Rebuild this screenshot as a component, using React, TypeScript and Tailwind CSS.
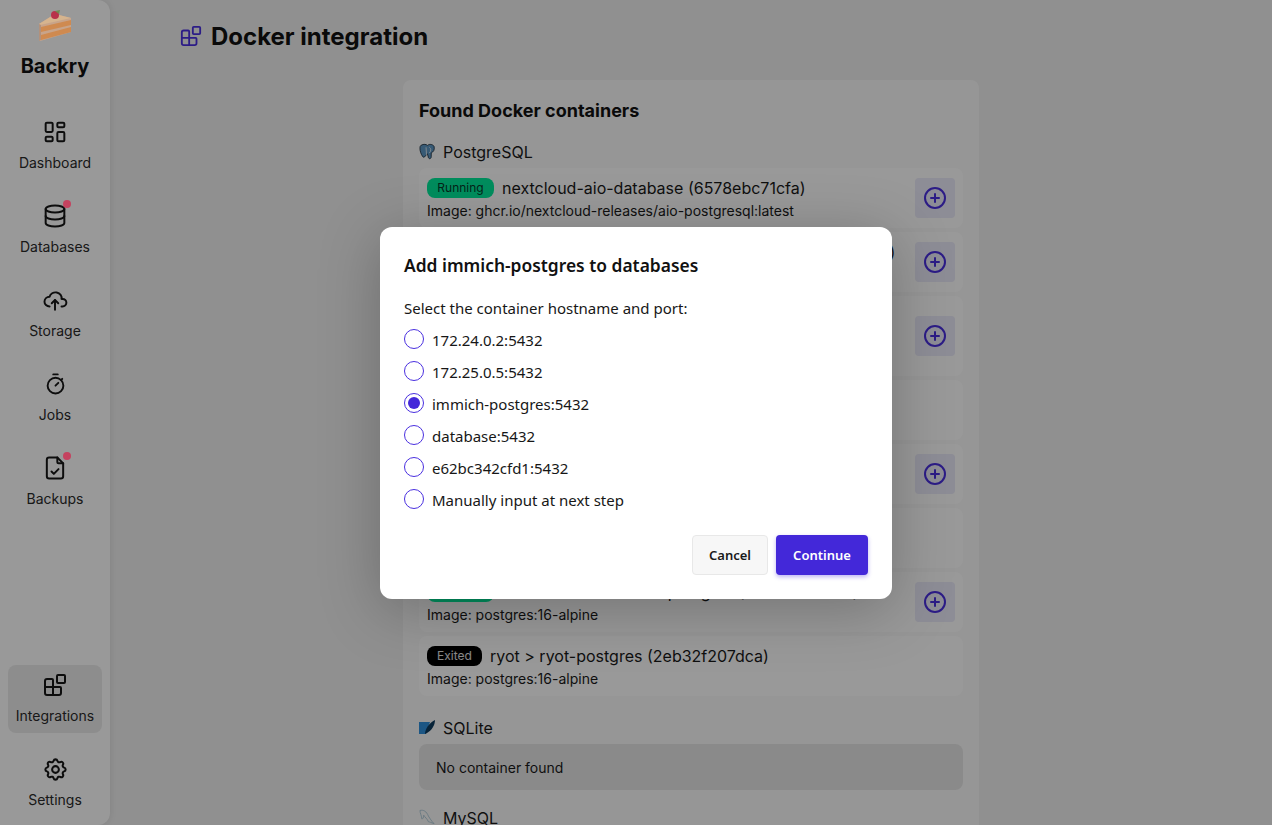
import React from "react";
import { Blocks, CirclePlus } from "lucide-react";
import { TbLayoutDashboard, TbDatabase, TbCloudUpload, TbStopwatch, TbFileCheck, TbSettings } from "react-icons/tb";

function Cake() {
  return (
    <svg width="34" height="34" viewBox="0 0 34 34" className="relative z-[60] block">
      <path d="M1 15 L17 5 L33 9 L33 23 L2 32 L1 31 Z" fill="#c8a48a" />
      <path d="M1 15 L17 5 L33 9 L2 16 Z" fill="#d6b48e" />
      <path d="M3 18 L33 11 L33 16 L3 23 Z" fill="#cf8a50" />
      <path d="M3 26 L33 18 L33 23 L3 31 Z" fill="#cf8a50" />
      <path d="M1 15 L3 16 L3 31 L1 32 Z" fill="#b2917c" />
      <circle cx="17" cy="6" r="4" fill="#b8324a" />
      <path d="M17 2 L22 1 L21 5 Z" fill="#6e8c50" />
    </svg>
  );
}

function Elephant() {
  return (
    <svg width="17" height="18" viewBox="0 0 17 18">
      <path d="M2 2 C5 0 8 1 9 2 C11 0 15 1 16 3 C17 7 15 9 13 10 L13 14 C13 16 11 17 10 15 L9 11 C7 12 6 16 4 14 C2 11 1 8 1 5 C1 4 1 3 2 2 Z" fill="#5c96c4" stroke="#1f2f3e" strokeWidth="0.9" />
      <path d="M7.5 4 L8 12 M11 4 C13 5 13 8 11 10" fill="none" stroke="#e8eef2" strokeWidth="0.9" />
    </svg>
  );
}

function Feather() {
  return (
    <svg width="16" height="16" viewBox="0 0 16 16">
      <path d="M0 2 H11 L7 14 H0 Z" fill="#2f8fdc" />
      <path d="M6 14 C6 9 10 3 16 0 C16 5 13 10 8 13 Z" fill="#0e3c60" />
    </svg>
  );
}

function Dolphin() {
  return (
    <svg width="17" height="18" viewBox="0 0 17 18" fill="none" stroke="#a8c6d6" strokeWidth="0.9">
      <path d="M1 1 C5 0 8 2 10 7 C12 10 13 12 16 15 C13 14 11 13 10 13 C9 10 6 8 5 6 C5 9 4 10 3 10 C3 7 1 4 1 1 Z" />
    </svg>
  );
}

function NavItem({ icon, label, active, dot }: { icon: React.ReactNode; label: string; active?: boolean; dot?: boolean }) {
  return (
    <div className={`flex flex-col items-center w-[94px] h-[68px] pt-2 rounded-lg text-[14px] leading-5 ${active ? "bg-[#ececec]" : ""}`}>
      <div className="relative flex h-6 w-6 items-center justify-center text-[#171717] [&>svg]:block [&>svg]:shrink-0">
        {icon}
        {dot && <span className="absolute -top-[4px] right-[-4px] w-2 h-2 rounded-full bg-[#c5425f] z-[60]" />}
      </div>
      <span className="mt-[9px] text-[#2a2a2a]">{label}</span>
    </div>
  );
}

function Badge({ exited }: { exited?: boolean }) {
  return exited ? (
    <span className="inline-block align-top h-5 w-[55px] rounded-lg bg-black text-white/90 text-[12px] leading-5 text-center mr-2">Exited</span>
  ) : (
    <span className="inline-block align-top h-5 w-[67px] rounded-lg bg-[#00eb9c] text-[#0a3a2a] text-[12px] leading-5 text-center mr-2">Running</span>
  );
}

function Row({ name, image, exited, plus }: { name: React.ReactNode; image: string; exited?: boolean; plus?: boolean }) {
  return (
    <div className="flex items-center justify-between mb-1 rounded-lg bg-[#ffffff] pl-2 pr-2 pt-[10px] pb-[7px]">
      <div className="min-w-0 flex-1">
        <div className="text-[16px] leading-5 text-[#1a1a1a]">
          <Badge exited={exited} />
          {name}
        </div>
        <div className="mt-[3px] text-[14px] leading-5 text-[#1a1a1a]">Image: {image}</div>
      </div>
      {plus && (
        <button className="flex h-10 w-10 mb-[3px] shrink-0 items-center justify-center rounded bg-[#ebebfa] text-[#4a30e0]">
          <CirclePlus size={24} strokeWidth={2} />
        </button>
      )}
    </div>
  );
}

function SectionHead({ icon, label, top }: { icon: React.ReactNode; label: string; top: string }) {
  return (
    <div className={`${top} mb-[6px] flex h-5 items-center gap-2 text-[16px] leading-5 text-[#1a1a1a]`}>
      <span className="flex w-4 justify-center">{icon}</span>
      {label}
    </div>
  );
}

function Radio({ label, checked }: { label: string; checked?: boolean }) {
  return (
    <div className="flex h-8 items-center gap-2 text-[15px] text-[#171717]">
      <span className="flex h-5 w-5 items-center justify-center rounded-full border border-[#4a30e0] bg-white">
        {checked && <span className="h-3 w-3 rounded-full bg-[#4328d9]" />}
      </span>
      <span className="pt-[3px]">{label}</span>
    </div>
  );
}

export default function App() {
  return (
    <div className="relative flex h-screen overflow-hidden bg-[#f0f0f0] font-['Inter',sans-serif]">
      <aside className="flex h-full w-[110px] shrink-0 flex-col items-center justify-between rounded-r-xl bg-white pb-2 shadow-[1px_0_6px_rgba(0,0,0,0.08)]">
        <div className="flex flex-col items-center">
          <div className="mt-[9px]"><Cake /></div>
          <div className="mt-[9px] text-[20px] font-bold leading-7 text-[#111]">Backry</div>
          <div className="mt-[32px] flex flex-col gap-4">
            <NavItem icon={<TbLayoutDashboard size={28} strokeWidth={1.7} />} label="Dashboard" />
            <NavItem icon={<TbDatabase size={28} strokeWidth={1.7} />} label="Databases" dot />
            <NavItem icon={<TbCloudUpload size={26} strokeWidth={1.8} />} label="Storage" />
            <NavItem icon={<TbStopwatch size={27} strokeWidth={1.7} />} label="Jobs" />
            <NavItem icon={<TbFileCheck size={28} strokeWidth={1.7} />} label="Backups" dot />
          </div>
        </div>
        <div className="flex flex-col gap-4">
          <NavItem icon={<Blocks size={24} />} label="Integrations" active />
          <NavItem icon={<TbSettings size={27} strokeWidth={1.8} />} label="Settings" />
        </div>
      </aside>

      <main className="min-w-0 flex-1 overflow-hidden">
        <div className="flex h-[80px] items-start gap-[9px] pl-[70px] pt-[21px] text-[24px] font-bold leading-8 text-[#111]">
          <span className="mt-1 text-[#4a30e0]"><Blocks size={22} /></span>
          Docker integration
        </div>
        <section className="mx-auto w-[576px] rounded-lg bg-[#fafafa] px-4 pt-[17px] pb-4">
          <h2 className="text-[18px] font-bold leading-7 text-[#111]">Found Docker containers</h2>
          <SectionHead top="mt-[17px]" icon={<Elephant />} label="PostgreSQL" />
          <Row name="nextcloud-aio-database (6578ebc71cfa)" image="ghcr.io/nextcloud-releases/aio-postgresql:latest" plus />
          <Row name="immich-database-replica-postgres1 (a83f10c27d6e)" image="ghcr.io/immich-app/postgres:14" plus />
          <Row name={<>immich-postgres<br />(e62bc342cfd1)</>} image="ghcr.io/immich-app/postgres:14-vectorchord0.4.3" plus />
          <Row name="forgejo-db (93ac51fe04d2)" image="postgres:15" />
          <Row name="outline-postgres (77d2ab19c3e0)" image="postgres:16-alpine" plus />
          <Row name="gitea-db (15ef87c0d3b4)" image="postgres:14" />
          <Row name="authentik > authentik-postgres (4fd0a7b1e982)" image="postgres:16-alpine" plus />
          <Row name="ryot > ryot-postgres (2eb32f207dca)" image="postgres:16-alpine" exited />
          <SectionHead top="mt-[22px]" icon={<Feather />} label="SQLite" />
          <div className="flex h-[46px] items-center rounded-lg bg-[#e6e6e6] px-[17px] text-[14px] text-[#1a1a1a]">No container found</div>
          <SectionHead top="mt-[18px]" icon={<Dolphin />} label="MySQL" />
        </section>
      </main>

      <div className="absolute inset-0 z-50 flex items-center justify-center bg-black/40">
        <div className="w-[512px] rounded-xl bg-white p-6 font-['Noto_Sans',sans-serif] shadow-[0_10px_60px_rgba(0,0,0,0.25)]">
          <h3 className="text-[17.4px] font-semibold leading-7 text-[#111]">Add immich-postgres to databases</h3>
          <p className="mt-[17px] text-[15px] leading-6 text-[#171717]">Select the container hostname and port:</p>
          <div className="mt-[3px]">
            <Radio label="172.24.0.2:5432" />
            <Radio label="172.25.0.5:5432" />
            <Radio label="immich-postgres:5432" checked />
            <Radio label="database:5432" />
            <Radio label="e62bc342cfd1:5432" />
            <Radio label="Manually input at next step" />
          </div>
          <div className="mt-5 flex justify-end gap-2">
            <button className="h-10 w-[76px] rounded border border-[#e8e8e8] bg-[#f7f7f7] pt-[3px] text-[13px] font-semibold text-[#1a1a1a]">Cancel</button>
            <button className="h-10 w-[92px] rounded bg-[#4328d9] pt-[3px] text-[13px] font-semibold text-white shadow-[0_2px_4px_rgba(67,40,217,0.35)]">Continue</button>
          </div>
        </div>
      </div>
    </div>
  );
}
